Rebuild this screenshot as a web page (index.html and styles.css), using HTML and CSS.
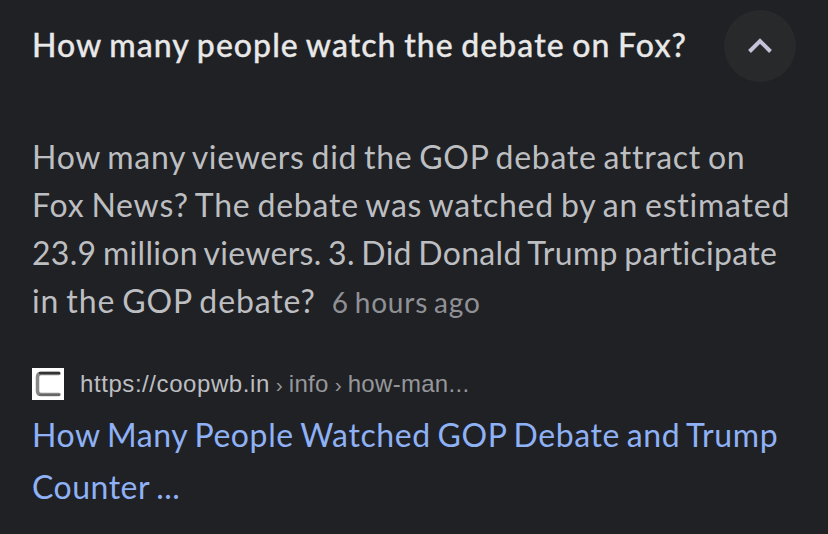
FILE: index.html
```html
<!doctype html>

<html lang="en">
<head>
  <meta charset="utf-8">
  <meta name="viewport" content="width=device-width, initial-scale=1">

  <title>People also ask</title>

  <link rel="stylesheet" href="styles.css">
</head>
<body>
  <main>
    <header class="question">
      <h2>How many people watch the debate on Fox?</h2>
      <button class="toggle" aria-label="Collapse">
        <svg width="24" height="16" viewBox="0 0 24 16"><path d="M1.5 13.5 12 3 22.5 13.5"/></svg>
      </button>
    </header>

    <p class="answer">
      <span class="line line-1">How many viewers did the GOP debate attract on</span>
      <span class="line line-2">Fox News? The debate was watched by an estimated</span>
      <span class="line line-3">23.9 million viewers. 3. Did Donald Trump participate</span>
      <span class="line"><span class="line-4">in the GOP debate?</span><span class="age">6 hours ago</span></span>
    </p>

    <div class="source">
      <svg class="favicon" width="32" height="32" viewBox="0 0 32 32">
        <rect width="32" height="32" fill="#fff"/>
        <path class="shade" d="M27 5.5H9Q5.5 5.5 5.5 9V23Q5.5 26.5 9 26.5H27"/>
        <path class="bar" d="M8 5H27"/>
        <path class="bottom" d="M8 27H27"/>
      </svg>
      <cite><span class="domain">https://coopwb.in</span><span class="sep">›</span><span class="path">info</span><span class="sep">›</span><span class="path">how-man...</span></cite>
    </div>

    <a class="result" href="#">
      <span class="line link-1">How Many People Watched GOP Debate and Trump</span>
      <span class="line link-2">Counter ...</span>
    </a>
  </main>
</body>
</html>
```
FILE: styles.css
```css
body {
  background-color: #202124;
  color: #bdbec1;
  font-family: Lato, sans-serif;
  margin: 0;
}
main {
  padding: 10px 32px 0;
}
.question {
  align-items: center;
  display: flex;
  height: 72px;
  justify-content: space-between;
}
h2 {
  -webkit-text-stroke: .3px #e8e8e8;
  color: #e8e8e8;
  font-size: 32px;
  font-weight: 500;
  letter-spacing: 1.04px;
  line-height: 40px;
  margin: 0;
  padding-bottom: 3px;
  white-space: nowrap;
  word-spacing: -1.5px;
}
.toggle {
  align-items: center;
  background-color: #28292a;
  border: 0;
  border-radius: 50%;
  display: flex;
  flex-shrink: 0;
  height: 72px;
  justify-content: center;
  padding: 0;
  width: 72px;
}
.toggle path {
  fill: none;
  stroke: #c3c4d9;
  stroke-width: 4;
}
.line {
  display: block;
  white-space: nowrap;
}
.answer {
  font-size: 32px;
  line-height: 48px;
  margin: 51px 0 0;
  word-spacing: -2px;
}
.answer .line {
  height: 48px;
}
.line-1 {
  letter-spacing: .7px;
}
.line-2 {
  letter-spacing: .78px;
}
.line-3 {
  letter-spacing: .3px;
}
.line-4 {
  letter-spacing: .88px;
}
.age {
  color: #909196;
  font-size: 28px;
  letter-spacing: .8px;
  margin-left: 16px;
}
.source {
  align-items: center;
  display: flex;
  height: 32px;
  margin-top: 43px;
}
.favicon {
  margin-right: 16px;
}
.favicon path {
  fill: none;
  stroke-linecap: round;
}
.favicon .shade {
  stroke: #888;
  stroke-width: 3.5;
}
.favicon .bar {
  stroke: #333;
  stroke-width: 2.4;
}
.favicon .bottom {
  stroke: #666;
  stroke-width: 2;
}
cite {
  align-items: baseline;
  display: flex;
  font-family: "Liberation Sans", sans-serif;
  font-size: 24px;
  font-style: normal;
}
.domain {
  letter-spacing: .57px;
}
.path,
.sep {
  color: #96979b;
}
.path {
  letter-spacing: .3px;
}
.sep {
  font-size: 21px;
  text-align: center;
  width: 19px;
}
.result {
  color: #8fb1f6;
  display: block;
  font-size: 32px;
  line-height: 52px;
  margin-top: 9px;
  text-decoration: none;
  word-spacing: -2px;
}
.link-1 {
  letter-spacing: .6px;
}
.link-2 {
  letter-spacing: .5px;
}
```
